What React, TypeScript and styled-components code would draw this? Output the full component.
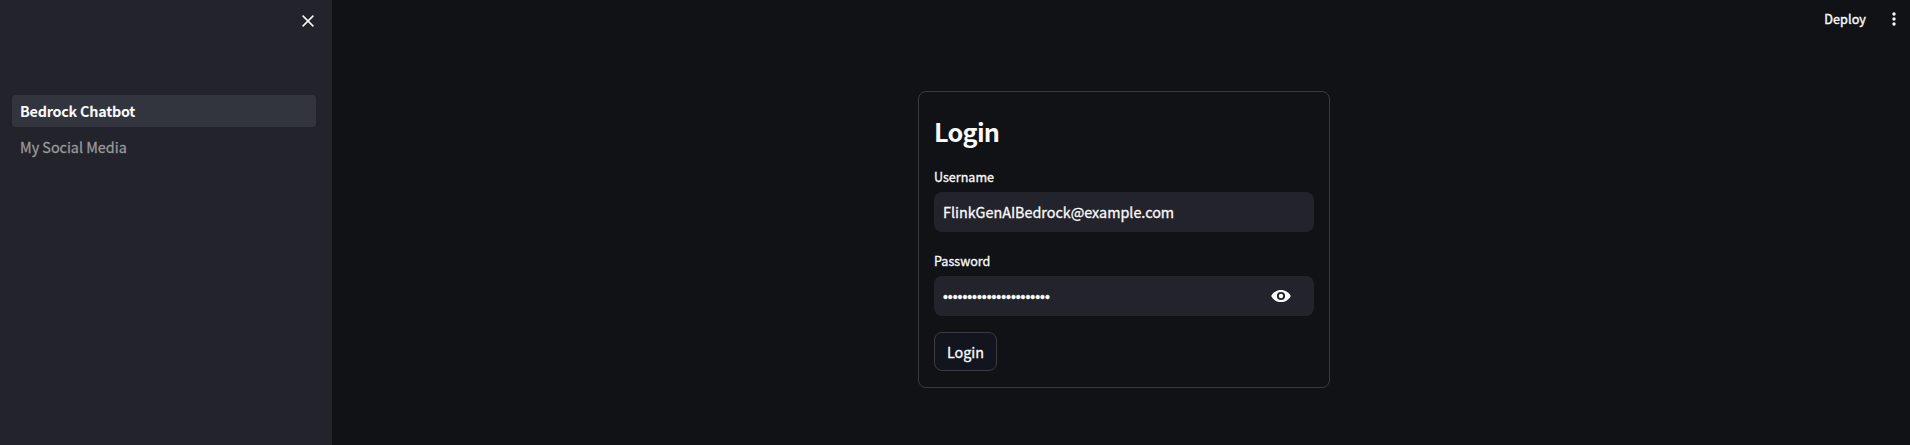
import React from "react";
import styled, { createGlobalStyle } from "styled-components";

const GlobalStyle = createGlobalStyle`
  * { box-sizing: border-box; }
  body {
    margin: 0;
    background: #111216;
    color: #fafafa;
    font-family: "Noto Sans CJK SC", "Noto Sans", sans-serif;
    font-size: 14.35px;
    -webkit-text-stroke: 0.3px currentColor;
    overflow: hidden;
  }
`;

const Page = styled.div`
  display: flex;
  height: 445px;
`;

const Sidebar = styled.aside`
  width: 332px;
  flex: none;
  background: #23232c;
`;

const SidebarHeader = styled.div`
  display: flex;
  justify-content: flex-end;
  height: 95px;
  padding: 11px 14px 0 0;
`;

const IconButton = styled.button`
  display: flex;
  align-items: center;
  justify-content: center;
  width: 20px;
  height: 20px;
  padding: 0;
  border: 0;
  background: none;
  color: #fafafa;
`;

const Nav = styled.nav`
  display: flex;
  flex-direction: column;
  gap: 4px;
  padding: 0 16px 0 12px;
`;

const NavItem = styled.a<{ $active?: boolean }>`
  height: 32px;
  padding: 0 8px;
  border-radius: 4px;
  line-height: 32px;
  font-weight: ${(p) => (p.$active ? 700 : 400)};
  letter-spacing: ${(p) => (p.$active ? "-0.23px" : "0")};
  -webkit-text-stroke-width: ${(p) => (p.$active ? "0" : "0.3px")};
  color: ${(p) => (p.$active ? "#fafafa" : "#98989d")};
  background: ${(p) => (p.$active ? "#33353e" : "transparent")};
`;

const Main = styled.main`
  flex: 1;
  display: flex;
  flex-direction: column;
`;

const Toolbar = styled.header`
  display: flex;
  align-items: center;
  justify-content: flex-end;
  gap: 18px;
  height: 91px;
  padding: 0 6px 53px 0;
`;

const Deploy = styled.span`
  font-size: 12.6px;
  letter-spacing: 0.1px;
  -webkit-text-stroke-width: 0.4px;
  line-height: 20px;
`;

const Card = styled.form`
  width: 412px;
  height: 297px;
  margin-left: 586px;
  padding: 15px;
  border: 1px solid #393a3f;
  border-radius: 8px;
`;

const Title = styled.h2`
  margin: 6px 0 15px;
  font-size: 25.2px;
  font-weight: 700;
  letter-spacing: -0.7px;
  line-height: 36px;
  -webkit-text-stroke-width: 0;
`;

const Field = styled.div`
  margin-bottom: 16px;
`;

const Label = styled.label`
  display: block;
  height: 28px;
  font-size: 12.55px;
  line-height: 26px;
`;

const InputBox = styled.div`
  display: flex;
  align-items: center;
  justify-content: space-between;
  height: 40px;
  padding: 0 23px 0 9px;
  border-radius: 8px;
  background: #23232c;
`;

const Value = styled.span`
  line-height: 40px;
`;

const Dots = styled.span`
  padding-top: 3px;
  font-family: "Liberation Sans", sans-serif;
  font-size: 14px;
  letter-spacing: -0.05px;
  line-height: 37px;
`;

const Submit = styled.button`
  display: block;
  width: 63px;
  height: 39px;
  padding: 0;
  border: 1px solid #3b3c42;
  border-radius: 8px;
  background: #12151d;
  color: #fafafa;
  font: inherit;
  -webkit-text-stroke: 0.3px currentColor;
`;

export default function App() {
  return (
    <>
      <GlobalStyle />
      <Page>
        <Sidebar>
          <SidebarHeader>
            <IconButton type="button" aria-label="Close sidebar">
              <svg width="12" height="12" viewBox="0 0 12 12" stroke="currentColor" strokeWidth="1.5">
                <path d="M.6.6 11.4 11.4M11.4.6.6 11.4" />
              </svg>
            </IconButton>
          </SidebarHeader>
          <Nav>
            <NavItem $active>Bedrock Chatbot</NavItem>
            <NavItem>My Social Media</NavItem>
          </Nav>
        </Sidebar>
        <Main>
          <Toolbar>
            <Deploy>Deploy</Deploy>
            <IconButton type="button" aria-label="Menu">
              <svg width="20" height="20" viewBox="0 0 20 20" fill="currentColor">
                <circle cx="10" cy="5" r="1.7" />
                <circle cx="10" cy="10" r="1.7" />
                <circle cx="10" cy="15" r="1.7" />
              </svg>
            </IconButton>
          </Toolbar>
          <Card>
            <Title>Login</Title>
            <Field>
              <Label>Username</Label>
              <InputBox>
                <Value>FlinkGenAIBedrock@example.com</Value>
              </InputBox>
            </Field>
            <Field>
              <Label>Password</Label>
              <InputBox>
                <Dots>{"•".repeat(22)}</Dots>
                <IconButton type="button" aria-label="Show password">
                  <svg width="20" height="20" viewBox="0 0 20 20" fill="currentColor" fillRule="evenodd">
                    <path d="M10 3.900C5.700 3.900 2 6.200.2 10c1.800 3.800 5.500 6.100 9.800 6.100s8-2.300 9.800-6.100C18 6.200 14.300 3.900 10 3.900zM10 5.900a4.100 4.100 0 1 1 0 8.200 4.100 4.100 0 0 1 0-8.200z" />
                    <circle cx="10" cy="10" r="2.200" />
                  </svg>
                </IconButton>
              </InputBox>
            </Field>
            <Submit type="button">Login</Submit>
          </Card>
        </Main>
      </Page>
    </>
  );
}
